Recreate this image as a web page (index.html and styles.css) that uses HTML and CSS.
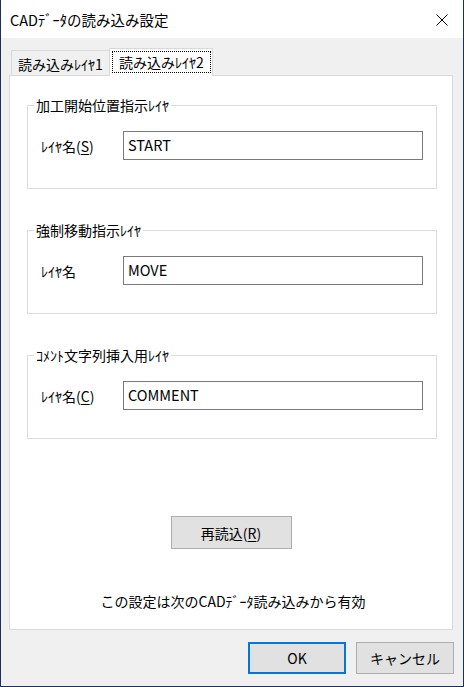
FILE: index.html
```html
<!DOCTYPE html>
<html lang="ja">
<head>
<meta charset="utf-8">
<title>CADﾃﾞｰﾀの読み込み設定</title>
<link rel="stylesheet" href="styles.css">
</head>
<body>
<div class="window">
  <div class="titlebar">
    <span class="title">CADﾃﾞｰﾀの読み込み設定</span>
    <svg class="close" width="12" height="12" viewBox="0 0 12 12"><path d="M0.5 0.5 L11.5 11.5 M11.5 0.5 L0.5 11.5" stroke="#000" stroke-width="1" fill="none"/></svg>
  </div>
  <div class="client">
    <div class="tabs">
      <div class="tab">読み込みﾚｲﾔ1</div>
      <div class="tab active"><span class="focus">読み込みﾚｲﾔ2</span></div>
    </div>
    <div class="panel">
      <div class="group">
        <span class="caption">加工開始位置指示ﾚｲﾔ</span>
        <div class="row">
          <span class="label">ﾚｲﾔ名(<u>S</u>)</span>
          <div class="input">START</div>
        </div>
      </div>
      <div class="group">
        <span class="caption">強制移動指示ﾚｲﾔ</span>
        <div class="row">
          <span class="label">ﾚｲﾔ名</span>
          <div class="input">MOVE</div>
        </div>
      </div>
      <div class="group">
        <span class="caption">ｺﾒﾝﾄ文字列挿入用ﾚｲﾔ</span>
        <div class="row">
          <span class="label">ﾚｲﾔ名(<u>C</u>)</span>
          <div class="input">COMMENT</div>
        </div>
      </div>
      <button class="btn reload">再読込(<u>R</u>)</button>
      <p class="note">この設定は次のCADﾃﾞｰﾀ読み込みから有効</p>
    </div>
    <div class="footer">
      <button class="btn ok">OK</button>
      <button class="btn">キャンセル</button>
    </div>
  </div>
</div>
</body>
</html>
```

FILE: styles.css
```css
* { box-sizing: border-box; }
html, body { margin: 0; padding: 0; background: #fff; }
body {
  font-family: "Noto Sans CJK JP", sans-serif;
  font-size: 14px;
  color: #000;
}
.window {
  width: 464px;
  height: 687px;
  border: 1px solid #1c3158;
  border-top: none;
  display: flex;
  flex-direction: column;
}
.titlebar {
  height: 38px;
  background: #fff;
  display: flex;
  align-items: center;
  padding-left: 9px;
  padding-right: 15px;
}
.title { font-size: 14.5px; line-height: 20px; padding-top: 1px; }
.close { margin-left: auto; margin-top: 1px; }
.client {
  flex: 1;
  background: #f0f0f0;
  padding: 10px 9px 12px 8px;
  display: flex;
  flex-direction: column;
}
.tabs {
  height: 27px;
  display: flex;
  align-items: flex-end;
}
.tab {
  height: 25px;
  width: 99px;
  margin-left: 2px;
  border: 1px solid #d9d9d9;
  border-bottom: none;
  background: #f0f0f0;
  display: flex;
  align-items: center;
  justify-content: center;
  line-height: 20px;
  padding-top: 1px;
}
.tab.active {
  position: relative;
  z-index: 1;
  height: 28px;
  width: 104px;
  margin-left: -1px;
  margin-bottom: -1px;
  background: #fff;
  padding: 2px 1px 0 2px;
  align-items: flex-start;
}
.focus {
  width: 100%;
  height: 22px;
  border: 1px dotted #000;
  display: flex;
  align-items: center;
  justify-content: center;
  line-height: 20px;
}
.panel {
  width: 444px;
  height: 555px;
  background: #fff;
  border: 1px solid #d9d9d9;
  display: flex;
  flex-direction: column;
}
.group {
  width: 410px;
  height: 84px;
  margin: 41px 0 0 17px;
  border: 1px solid #dcdcdc;
  display: flex;
  flex-direction: column;
  align-items: flex-start;
}
.group:first-child { margin-top: 29px; }
.caption {
  margin: -11px 0 0 6px;
  padding: 0 2px;
  background: #fff;
  line-height: 20px;
}
.row {
  margin-top: 16px;
  display: flex;
  align-items: center;
  padding-left: 13px;
}
.label { width: 82px; line-height: 20px; }
.input {
  width: 300px;
  height: 29px;
  border: 1px solid #7a7a7a;
  padding: 0 4px;
  line-height: 25px;
  font-size: 14.5px;
}
u { text-decoration-thickness: 1px; text-underline-offset: 2px; }
.btn {
  font: inherit;
  color: #000;
  background: #e1e1e1;
  border: 1px solid #adadad;
  padding: 0;
  margin: 0;
  line-height: 20px;
}
.reload {
  width: 121px;
  height: 33px;
  align-self: center;
  margin-top: 77px;
}
.note {
  margin: 42px 0 0 0;
  text-align: center;
  line-height: 20px;
  padding-left: 4px;
}
.footer {
  margin-top: 12px;
  display: flex;
  justify-content: flex-end;
  gap: 10px;
}
.footer .btn { width: 98px; height: 32px; }
.footer .ok { border: 2px solid #0078d7; }
```
